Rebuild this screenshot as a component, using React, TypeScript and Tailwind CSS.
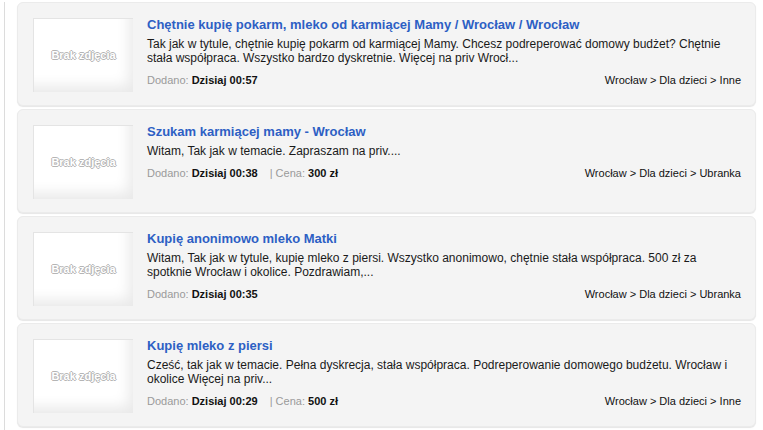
const listings = [
  {
    title: 'Chętnie kupię pokarm, mleko od karmiącej Mamy / Wrocław / Wrocław',
    desc: 'Tak jak w tytule, chętnie kupię pokarm od karmiącej Mamy. Chcesz podreperować domowy budżet? Chętnie stała współpraca. Wszystko bardzo dyskretnie. Więcej na priv Wrocł...',
    added: 'Dzisiaj 00:57',
    price: null as string | null,
    category: 'Wrocław > Dla dzieci > Inne',
  },
  {
    title: 'Szukam karmiącej mamy - Wrocław',
    desc: 'Witam, Tak jak w temacie. Zapraszam na priv....',
    added: 'Dzisiaj 00:38',
    price: '300 zł',
    category: 'Wrocław > Dla dzieci > Ubranka',
  },
  {
    title: 'Kupię anonimowo mleko Matki',
    desc: 'Witam, Tak jak w tytule, kupię mleko z piersi. Wszystko anonimowo, chętnie stała współpraca. 500 zł za spotknie Wrocław i okolice. Pozdrawiam,...',
    added: 'Dzisiaj 00:35',
    price: null,
    category: 'Wrocław > Dla dzieci > Ubranka',
  },
  {
    title: 'Kupię mleko z piersi',
    desc: 'Cześć, tak jak w temacie. Pełna dyskrecja, stała współpraca. Podreperowanie domowego budżetu. Wrocław i okolice Więcej na priv...',
    added: 'Dzisiaj 00:29',
    price: '500 zł',
    category: 'Wrocław > Dla dzieci > Inne',
  },
];

function NoPhoto() {
  return (
    <div className="w-[100px] h-[74px] flex-shrink-0 flex items-center justify-center bg-white border-l border-t border-[#e4e4e4] shadow-[inset_-10px_-12px_14px_-6px_rgba(0,0,0,0.09)]">
      <span className="text-[11px] font-bold text-white [text-shadow:1px_0_0_#b5b5b5,-1px_0_0_#b5b5b5,0_1px_0_#b5b5b5,0_-1px_0_#b5b5b5]">
        Brak zdjęcia
      </span>
    </div>
  );
}

export default function App() {
  return (
    <div className="w-[763px] h-[430px] bg-white font-['Liberation_Sans',Arial,sans-serif] pt-0.5 pr-[7px]">
      <div className="ml-1 h-full border-l border-[#dcdcdc] pl-3 flex flex-col gap-[3px]">
        {listings.map((item) => (
          <div
            key={item.title}
            className="h-[104px] flex-shrink-0 flex bg-[#f4f4f4] rounded-md border border-[#ebebeb] shadow-[0_1px_1px_rgba(0,0,0,0.10)] pt-[14px] pb-[15px] pl-[15px] pr-[14px]"
          >
            <div className="pt-px">
              <NoPhoto />
            </div>
            <div className="flex-1 min-w-0 pl-[14px]">
              <div className="text-[13px] leading-4 font-bold text-[#2d5fc4]">{item.title}</div>
              <p className="mt-1 text-[12px] leading-[14px] text-[#1a1a1a]">{item.desc}</p>
              <div className="mt-2 flex justify-between text-[11px] leading-[14px]">
                <div>
                  <span className="text-[#9a9a9a]">Dodano: </span>
                  <span className="font-bold text-[#111]">{item.added}</span>
                  {item.price && (
                    <>
                      <span className="text-[#9a9a9a] ml-3">| Cena: </span>
                      <span className="font-bold text-[#111]">{item.price}</span>
                    </>
                  )}
                </div>
                <div className="text-[#111]">{item.category}</div>
              </div>
            </div>
          </div>
        ))}
      </div>
    </div>
  );
}
